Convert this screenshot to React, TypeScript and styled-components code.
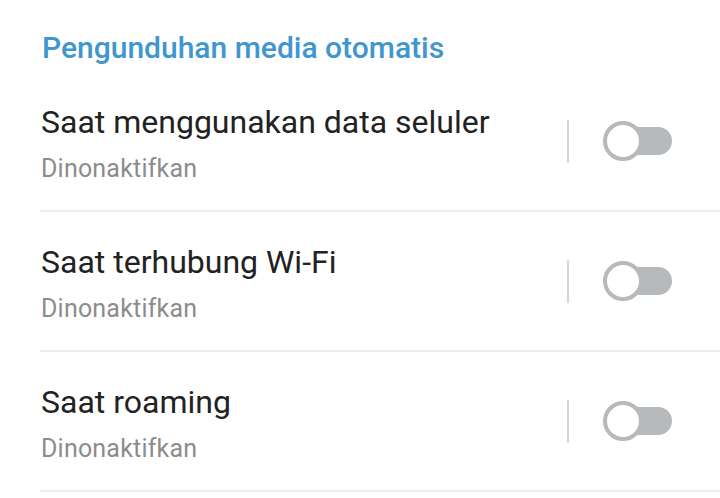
import styled, { createGlobalStyle } from 'styled-components';

const GlobalStyle = createGlobalStyle`
  html, body {
    margin: 0;
    padding: 0;
    background: #ffffff;
  }
  body {
    font-family: Roboto, "Noto Sans", "Liberation Sans", sans-serif;
  }
`;

interface settingItem {
  title: string,
  status: string,
  enabled: boolean
}

const items: settingItem[] = [
  { title: 'Saat menggunakan data seluler', status: 'Dinonaktifkan', enabled: false },
  { title: 'Saat terhubung Wi-Fi', status: 'Dinonaktifkan', enabled: false },
  { title: 'Saat roaming', status: 'Dinonaktifkan', enabled: false },
];

const Page = styled.div`
  width: 720px;
  height: 498px;
  overflow: hidden;
  background: #ffffff;
`;

const Heading = styled.h2`
  margin: 0;
  padding: 30px 0 6px 42px;
  font-size: 30px;
  line-height: 36px;
  font-weight: 500;
  color: #4096cf;
`;

const SettingRow = styled.div`
  display: flex;
  align-items: center;
  height: 138px;
  margin-left: 40px;
  padding-right: 48px;
  border-bottom: 2px solid #ebebeb;
`;

const Texts = styled.div`
  flex: 1;
  display: flex;
  flex-direction: column;
  gap: 11px;
  padding: 4px 0 0 1px;
`;

const Title = styled.span`
  font-size: 32px;
  line-height: 40px;
  color: #222222;
`;

const Status = styled.span`
  font-size: 25px;
  line-height: 32px;
  letter-spacing: 0.2px;
  color: #8c8c8c;
`;

const Separator = styled.div`
  width: 2px;
  height: 43px;
  background: #d6d6d6;
  margin-right: 34px;
`;

const Toggle = styled.button<{ $on: boolean }>`
  position: relative;
  width: 69px;
  height: 40px;
  padding: 0;
  border: none;
  background: transparent;
  cursor: pointer;
`;

const Track = styled.span<{ $on: boolean }>`
  position: absolute;
  left: 8px;
  right: 0;
  top: 6px;
  height: 28px;
  border-radius: 14px;
  background: ${p => p.$on ? '#4096cf' : '#b6babd'};
`;

const Knob = styled.span<{ $on: boolean }>`
  position: absolute;
  left: ${p => p.$on ? '29px' : '0'};
  top: 0;
  width: 40px;
  height: 40px;
  box-sizing: border-box;
  border-radius: 50%;
  border: 4px solid ${p => p.$on ? '#4096cf' : '#b6babd'};
  background: #ffffff;
`;

const Row = ({ title, status, enabled }: settingItem) => (
  <SettingRow>
    <Texts>
      <Title>{title}</Title>
      <Status>{status}</Status>
    </Texts>
    <Separator />
    <Toggle $on={enabled} aria-label={title}>
      <Track $on={enabled} />
      <Knob $on={enabled} />
    </Toggle>
  </SettingRow>
);

export default function App() {
  return (
    <Page>
      <GlobalStyle />
      <Heading>Pengunduhan media otomatis</Heading>
      {items.map(item => <Row key={item.title} {...item} />)}
    </Page>
  );
}
